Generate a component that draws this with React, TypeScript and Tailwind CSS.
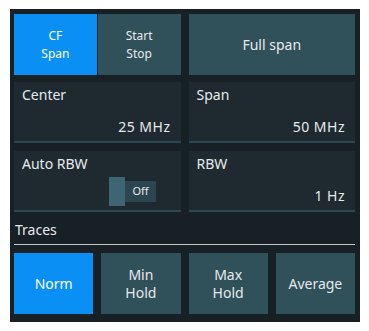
const Btn = ({ label, active = false }: { label: React.ReactNode; active?: boolean }) => (
  <div
    className={`flex items-center justify-center text-center leading-[18px] ${
      active ? "bg-[#0a8ff5] text-white" : "bg-[#30505a] text-[#e6eaec]"
    }`}
  >
    {label}
  </div>
);

const Field = ({ label, value, children }: { label: string; value?: string; children?: React.ReactNode }) => (
  <div className="relative h-[61px] bg-[#1e2a30] border-b-2 border-[#2b4753] px-2 pt-[2px]">
    <div className="text-[14px] text-[#e6eaec]">{label}</div>
    {value && (
      <div className="absolute right-[10px] bottom-[4px] text-[14px] tracking-[0.5px] text-[#e6eaec]">{value}</div>
    )}
    {children}
  </div>
);

export default function App() {
  return (
    <div className="bg-white w-[369px] h-[331px] pt-[9px] pl-[10px]" style={{ fontFamily: '"Noto Sans", "Open Sans", sans-serif' }}>
      <div className="w-[350px] h-[313px] bg-[#172024] pt-[5px] pl-[4px] pr-[5px]">
        <div className="grid grid-cols-2 gap-x-[8px] gap-y-[7px]">
          <div className="grid grid-cols-2 gap-[1px] h-[61px] text-[12px]">
            <Btn active label={<>CF<br />Span</>} />
            <Btn label={<>Start<br />Stop</>} />
          </div>
          <div className="grid h-[61px] text-[14px]">
            <Btn label="Full span" />
          </div>
          <Field label="Center" value="25 MHz" />
          <Field label="Span" value="50 MHz" />
        </div>
        <div className="grid grid-cols-2 gap-x-[8px] mt-[8px]">
          <Field label="Auto RBW">
            <div className="absolute left-[95px] top-[26px] flex items-center">
              <div className="w-[16px] h-[29px] bg-[#3d6572]" />
              <div className="w-[31px] h-[21px] bg-[#2b4650] flex items-center justify-center text-[11px] text-[#e6eaec]">Off</div>
            </div>
          </Field>
          <Field label="RBW" value="1 Hz" />
        </div>
        <div className="h-[33px] flex items-end pb-[4px] pl-[1px] text-[14px] text-[#e6eaec] border-b border-[#c4cacc]">Traces</div>
        <div className="grid grid-cols-4 gap-x-[8px] mt-[8px] h-[61px] text-[14px]">
          <Btn active label="Norm" />
          <Btn label={<>Min<br />Hold</>} />
          <Btn label={<>Max<br />Hold</>} />
          <Btn label="Average" />
        </div>
      </div>
    </div>
  );
}
